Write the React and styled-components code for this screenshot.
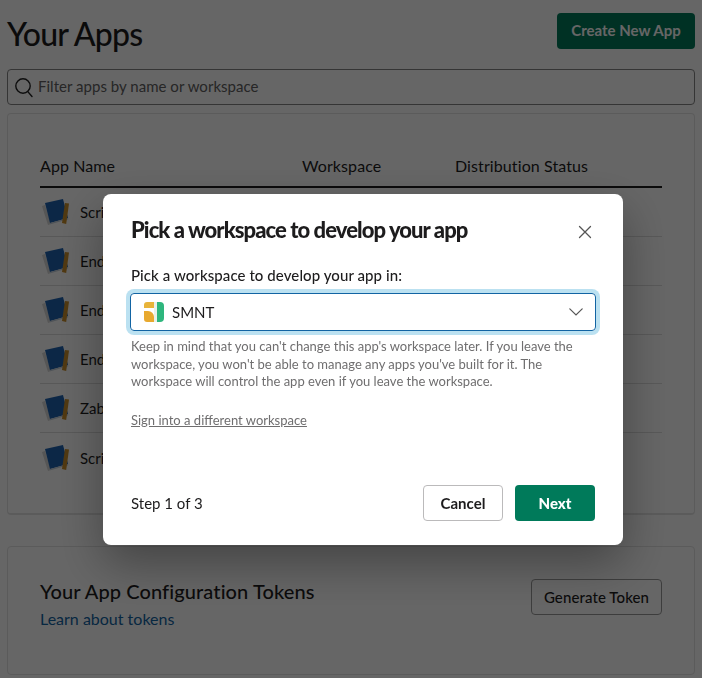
import styled, { createGlobalStyle } from "styled-components";

const apps = ["Scri", "End", "End", "End", "Zab", "Scri"];

export default function App() {
  return (
    <>
      <GlobalStyle />
      <Page>
        <Header>
          <Title>Your Apps</Title>
          <CreateButton>Create New App</CreateButton>
        </Header>
        <SearchBox>
          <SearchIcon />
          <SearchText>Filter apps by name or workspace</SearchText>
        </SearchBox>
        <AppsCard>
          <TableHead>
            <span>App Name</span>
            <span>Workspace</span>
            <span>Distribution Status</span>
          </TableHead>
          {apps.map((name, i) => (
            <AppRow key={i}>
              <BookIcon />
              <span>{name}</span>
            </AppRow>
          ))}
        </AppsCard>
        <TokensCard>
          <div>
            <TokensTitle>Your App Configuration Tokens</TokensTitle>
            <TokensLink>Learn about tokens</TokensLink>
          </div>
          <GenerateButton>Generate Token</GenerateButton>
        </TokensCard>
      </Page>
      <Overlay>
        <Modal>
          <ModalHead>
            <ModalTitle>Pick a workspace to develop your app</ModalTitle>
            <CloseIcon />
          </ModalHead>
          <FieldLabel>Pick a workspace to develop your app in:</FieldLabel>
          <Select>
            <WorkspaceLogo />
            <SelectText>SMNT</SelectText>
            <ChevronIcon />
          </Select>
          <Help>
            Keep in mind that you can't change this app's workspace later. If you leave the
            workspace, you won't be able to manage any apps you've built for it. The
            workspace will control the app even if you leave the workspace.
          </Help>
          <SignIn>Sign into a different workspace</SignIn>
          <ModalFoot>
            <Step>Step 1 of 3</Step>
            <FootButtons>
              <CancelButton>Cancel</CancelButton>
              <NextButton>Next</NextButton>
            </FootButtons>
          </ModalFoot>
        </Modal>
      </Overlay>
    </>
  );
}

function SearchIcon() {
  return (
    <svg width="20" height="22" viewBox="0 0 20 22" fill="none" stroke="#222" strokeWidth="1.4">
      <circle cx="9" cy="10" r="7.2" />
      <path d="M13.8 15.6 L18 20.5" strokeLinecap="round" />
    </svg>
  );
}

function BookIcon() {
  return (
    <svg width="30" height="30" viewBox="0 0 30 30">
      <path d="M2 9 L5 8 L11 27 L8 28 Z" fill="#d6d6d6" />
      <path d="M5 6 L23 2 L28 21 L10 26 Z" fill="#1f62b0" />
      <path d="M10 26 L28 21 L28.3 22.2 L10.4 27.2 Z" fill="#c4d0dc" />
      <path d="M25 6 L29 6.4 L26.2 27 L22 26 Z" fill="#c98f2c" />
    </svg>
  );
}

function CloseIcon() {
  return (
    <CloseSvg width="14" height="14" viewBox="0 0 14 14" stroke="#555" strokeWidth="1.3" strokeLinecap="round">
      <path d="M1.5 1.5 L12.5 12.5 M12.5 1.5 L1.5 12.5" />
    </CloseSvg>
  );
}

function ChevronIcon() {
  return (
    <svg width="14" height="8" viewBox="0 0 14 8" fill="none" stroke="#555" strokeWidth="1.2" strokeLinecap="round">
      <path d="M0.8 0.8 L7 7 L13.2 0.8" />
    </svg>
  );
}

function WorkspaceLogo() {
  return (
    <svg width="21" height="21" viewBox="0 0 21 21">
      <rect x="10" y="0" width="3" height="20" fill="#e9f0ea" />
      <path d="M3 0 H10 V6 H0 V3 A3 3 0 0 1 3 0 Z" fill="#e8b43a" />
      <path d="M0 9 L4 9 A6 6 0 0 1 10 15 V20 H3 A3 3 0 0 1 0 17 Z" fill="#e8a92f" />
      <path d="M13 0 H16 A4 4 0 0 1 20 4 V16 A4 4 0 0 1 16 20 H13 Z" fill="#2eb67d" />
    </svg>
  );
}

const GlobalStyle = createGlobalStyle`
  html, body {
    margin: 0;
    padding: 0;
    background: #fff;
    font-family: "Lato", "Liberation Sans", sans-serif;
    color: #1d1c1d;
    overflow: hidden;
  }
  * { box-sizing: border-box; }
`;

const Page = styled.div`
  width: 702px;
  height: 678px;
  padding: 13px 7px 0;
`;

const Header = styled.div`
  display: flex;
  justify-content: space-between;
  align-items: flex-start;
  height: 56px;
`;

const Title = styled.h1`
  margin: 0;
  font-size: 32px;
  line-height: 42px;
  font-weight: 500;
  letter-spacing: -0.8px;
`;

const CreateButton = styled.button`
  width: 138px;
  height: 36px;
  border: none;
  border-radius: 4px;
  background: #007a5a;
  color: #fff;
  font: 700 15px "Lato", sans-serif;
  padding: 0 0 2px;
`;

const SearchBox = styled.div`
  height: 36px;
  border: 1px solid #868686;
  border-radius: 4px;
  display: flex;
  align-items: center;
  gap: 4px;
  padding: 0 6px;
  background: #fff;
`;

const SearchText = styled.span`
  font-size: 15px;
  letter-spacing: 0.03px;
  padding-bottom: 2px;
  color: #616061;
`;

const AppsCard = styled.div`
  margin-top: 8px;
  height: 402px;
  padding: 40px 32px 0;
  background: #fff;
  border: 1px solid #e4e4e4;
  border-bottom-width: 2px;
  border-radius: 4px;
`;

const TableHead = styled.div`
  display: grid;
  grid-template-columns: 262px 153px 1fr;
  height: 34px;
  border-bottom: 2px solid #1d1c1d;
  font-size: 16px;
  line-height: 24px;
  letter-spacing: 0.1px;
`;

const AppRow = styled.div`
  display: flex;
  align-items: center;
  gap: 10px;
  height: 49px;
  border-bottom: 1px solid #dddddd;
  font-size: 15px;
  white-space: nowrap;
  &:last-child { border-bottom: none; }
`;

const TokensCard = styled.div`
  margin-top: 31px;
  height: 129px;
  padding: 30px 32px 0;
  display: flex;
  justify-content: space-between;
  align-items: flex-start;
  border: 1px solid #e4e4e4;
  border-radius: 4px;
`;

const TokensTitle = styled.div`
  font-size: 20px;
  line-height: 28px;
  font-weight: 500;
  letter-spacing: 0.1px;
`;

const TokensLink = styled.a`
  display: block;
  margin-top: 3px;
  font-size: 16px;
  line-height: 22px;
  color: #1264a3;
`;

const GenerateButton = styled.button`
  width: 131px;
  height: 36px;
  margin-top: 2px;
  background: #fff;
  border: 1px solid #9a9a9a;
  border-radius: 4px;
  font: 500 15px "Lato", sans-serif;
  letter-spacing: 0.1px;
  color: #1d1c1d;
  padding: 0;
`;

const Overlay = styled.div`
  position: fixed;
  inset: 0;
  background: rgba(0, 0, 0, 0.6);
  display: flex;
  justify-content: center;
  align-items: flex-start;
  padding: 194px 0 0 24px;
`;

const Modal = styled.div`
  width: 520px;
  height: 351px;
  padding: 20px 28px 24px;
  background: #fff;
  border-radius: 8px;
  box-shadow: 0 18px 48px rgba(0, 0, 0, 0.35);
  display: flex;
  flex-direction: column;
`;

const ModalHead = styled.div`
  display: flex;
  justify-content: space-between;
  align-items: center;
  height: 32px;
`;

const ModalTitle = styled.h2`
  margin: 0;
  font-size: 22px;
  line-height: 30px;
  font-weight: 900;
  letter-spacing: -0.93px;
`;

const CloseSvg = styled.svg`
  margin: 4px 3px 0 0;
`;

const FieldLabel = styled.div`
  margin-top: 18px;
  font-size: 15px;
  line-height: 22px;
  font-weight: 500;
  letter-spacing: 0.08px;
`;

const Select = styled.div`
  margin: 7px -1px 0;
  height: 38px;
  display: flex;
  align-items: center;
  padding: 0 12px 0 13px;
  border: 1px solid #1264a3;
  border-radius: 4px;
  box-shadow: 0 0 0 4px rgba(29, 155, 209, 0.3);
`;

const SelectText = styled.span`
  flex: 1;
  margin-left: 7px;
  font-size: 15px;
`;

const Help = styled.p`
  margin: 7px 0 0;
  font-size: 13px;
  line-height: 17.5px;
  color: #6f6e6f;
`;

const SignIn = styled.a`
  margin-top: 20px;
  font-size: 13px;
  line-height: 18px;
  color: #6f6e6f;
  text-decoration: underline;
`;

const ModalFoot = styled.div`
  margin-top: auto;
  display: flex;
  justify-content: space-between;
  align-items: center;
`;

const Step = styled.span`
  font-size: 15px;
  color: #1d1c1d;
`;

const FootButtons = styled.div`
  display: flex;
  gap: 12px;
`;

const CancelButton = styled.button`
  width: 80px;
  height: 36px;
  padding: 0;
  background: #fff;
  border: 1px solid #bbbabb;
  border-radius: 4px;
  font: 700 15px "Lato", sans-serif;
  color: #1d1c1d;
`;

const NextButton = styled.button`
  width: 80px;
  height: 36px;
  padding: 0;
  background: #007a5a;
  border: none;
  border-radius: 4px;
  font: 900 15px "Lato", sans-serif;
  color: #fff;
`;
